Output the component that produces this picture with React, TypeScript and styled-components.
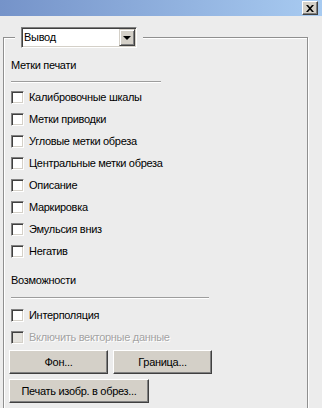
import styled, { createGlobalStyle } from "styled-components";

const GlobalStyle = createGlobalStyle`
  html, body {
    margin: 0;
    padding: 0;
    background: #ececec;
  }
  body {
    font-family: "Liberation Sans", Arial, sans-serif;
    font-size: 11px;
    letter-spacing: -0.3px;
    color: #000;
  }
`;

const Window = styled.div`
  width: 322px;
  height: 408px;
  overflow: hidden;
  background: #ececec;
  display: flex;
  flex-direction: column;
`;

const TitleBar = styled.div`
  height: 16px;
  flex: none;
  display: flex;
  align-items: center;
  justify-content: flex-end;
  padding-right: 4px;
  background: linear-gradient(to right, #7593c9, #a8cbf1);
`;

const CloseButton = styled.div`
  width: 16px;
  height: 14px;
  box-sizing: border-box;
  background: #d4d0c8;
  border: 1px solid;
  border-color: #fff #404040 #404040 #fff;
  box-shadow: inset -1px -1px 0 #808080;
  display: flex;
  align-items: center;
  justify-content: center;
`;

const Body = styled.div`
  padding: 11px 0 0 3px;
`;

const Group = styled.fieldset`
  width: 305px;
  box-sizing: border-box;
  margin: 0;
  padding: 0 0 30px 5px;
  border: 1px solid #8f8f8f;
  box-shadow: inset 1px 1px 0 #fff, 1px 1px 0 #fff;
  display: flex;
  flex-direction: column;
`;

const Legend = styled.legend`
  margin-left: 6px;
  padding: 0 6px;
  background: #ececec;
`;

const Combo = styled.div`
  width: 116px;
  height: 21px;
  box-sizing: border-box;
  background: #fff;
  border: 1px solid;
  border-color: #808080 #fff #fff #808080;
  box-shadow: inset 1px 1px 0 #404040, inset -1px -1px 0 #d4d0c8;
  display: flex;
  align-items: center;
  justify-content: space-between;
  padding: 1px 1px 1px 2px;
`;

const ComboText = styled.span`
  line-height: 13px;
`;

const ComboButton = styled.div`
  width: 16px;
  height: 17px;
  box-sizing: border-box;
  background: #d4d0c8;
  border: 1px solid;
  border-color: #d4d0c8 #404040 #404040 #d4d0c8;
  box-shadow: inset 1px 1px 0 #fff, inset -1px -1px 0 #808080;
  display: flex;
  align-items: center;
  justify-content: center;
`;

const Arrow = styled.div`
  width: 0;
  height: 0;
  border-left: 4px solid transparent;
  border-right: 4px solid transparent;
  border-top: 4px solid #000;
  margin-top: 1px;
`;

const SectionLabel = styled.div<{ $top: number }>`
  margin: ${(p) => p.$top}px 0 0 2px;
  line-height: 14px;
`;

const Separator = styled.div<{ $width: number; $top: number }>`
  width: ${(p) => p.$width}px;
  margin: ${(p) => p.$top}px 0 0 2px;
  border-top: 1px solid #9d9d9d;
  border-bottom: 1px solid #fff;
`;

const CheckList = styled.div<{ $top: number }>`
  display: flex;
  flex-direction: column;
  gap: 9px;
  margin: ${(p) => p.$top}px 0 0 2px;
`;

const CheckRow = styled.label<{ $disabled?: boolean }>`
  display: flex;
  align-items: center;
  gap: 5px;
  height: 13px;
  line-height: 13px;
  color: ${(p) => (p.$disabled ? "#a3a3a3" : "#000")};
  text-shadow: ${(p) => (p.$disabled ? "1px 1px 0 #fff" : "none")};
`;

const Box = styled.span<{ $disabled?: boolean }>`
  width: 13px;
  height: 13px;
  flex: none;
  box-sizing: border-box;
  background: ${(p) => (p.$disabled ? "#e4e2dd" : "#fff")};
  border: 1px solid;
  border-color: #808080 #fff #fff #808080;
  box-shadow: inset 1px 1px 0 #404040, inset -1px -1px 0 #d4d0c8;
`;

const ButtonRow = styled.div<{ $top: number }>`
  display: flex;
  gap: 5px;
  margin-top: ${(p) => p.$top}px;
`;

const Button = styled.button<{ $width: number }>`
  width: ${(p) => p.$width}px;
  height: 24px;
  box-sizing: border-box;
  padding: 0;
  font-family: "Liberation Sans", Arial, sans-serif;
  font-size: 11px;
  letter-spacing: -0.3px;
  color: #000;
  background: #d4d0c8;
  border: 1px solid;
  border-color: #fff #404040 #404040 #fff;
  box-shadow: inset -1px -1px 0 #808080;
  border-radius: 0;
`;

const printMarks = [
  "Калибровочные шкалы",
  "Метки приводки",
  "Угловые метки обреза",
  "Центральные метки обреза",
  "Описание",
  "Маркировка",
  "Эмульсия вниз",
  "Негатив",
];

export default function App() {
  return (
    <Window>
      <GlobalStyle />
      <TitleBar>
        <CloseButton>
          <svg width="8" height="7" viewBox="0 0 8 7">
            <path
              d="M0 0h2l2 2.2L6 0h2L5 3.5 8 7H6L4 4.8 2 7H0l3-3.5z"
              fill="#000"
            />
          </svg>
        </CloseButton>
      </TitleBar>
      <Body>
        <Group>
          <Legend>
            <Combo>
              <ComboText>Вывод</ComboText>
              <ComboButton>
                <Arrow />
              </ComboButton>
            </Combo>
          </Legend>
          <SectionLabel $top={10}>Метки печати</SectionLabel>
          <Separator $width={150} $top={9} />
          <CheckList $top={8}>
            {printMarks.map((label) => (
              <CheckRow key={label}>
                <Box />
                {label}
              </CheckRow>
            ))}
          </CheckList>
          <SectionLabel $top={15}>Возможности</SectionLabel>
          <Separator $width={198} $top={10} />
          <CheckList $top={10}>
            <CheckRow>
              <Box />
              Интерполяция
            </CheckRow>
            <CheckRow $disabled>
              <Box $disabled />
              Включить векторные данные
            </CheckRow>
          </CheckList>
          <ButtonRow $top={6}>
            <Button $width={99}>Фон...</Button>
            <Button $width={99}>Граница...</Button>
          </ButtonRow>
          <ButtonRow $top={5}>
            <Button $width={140}>Печать изобр. в обрез...</Button>
          </ButtonRow>
        </Group>
      </Body>
    </Window>
  );
}
